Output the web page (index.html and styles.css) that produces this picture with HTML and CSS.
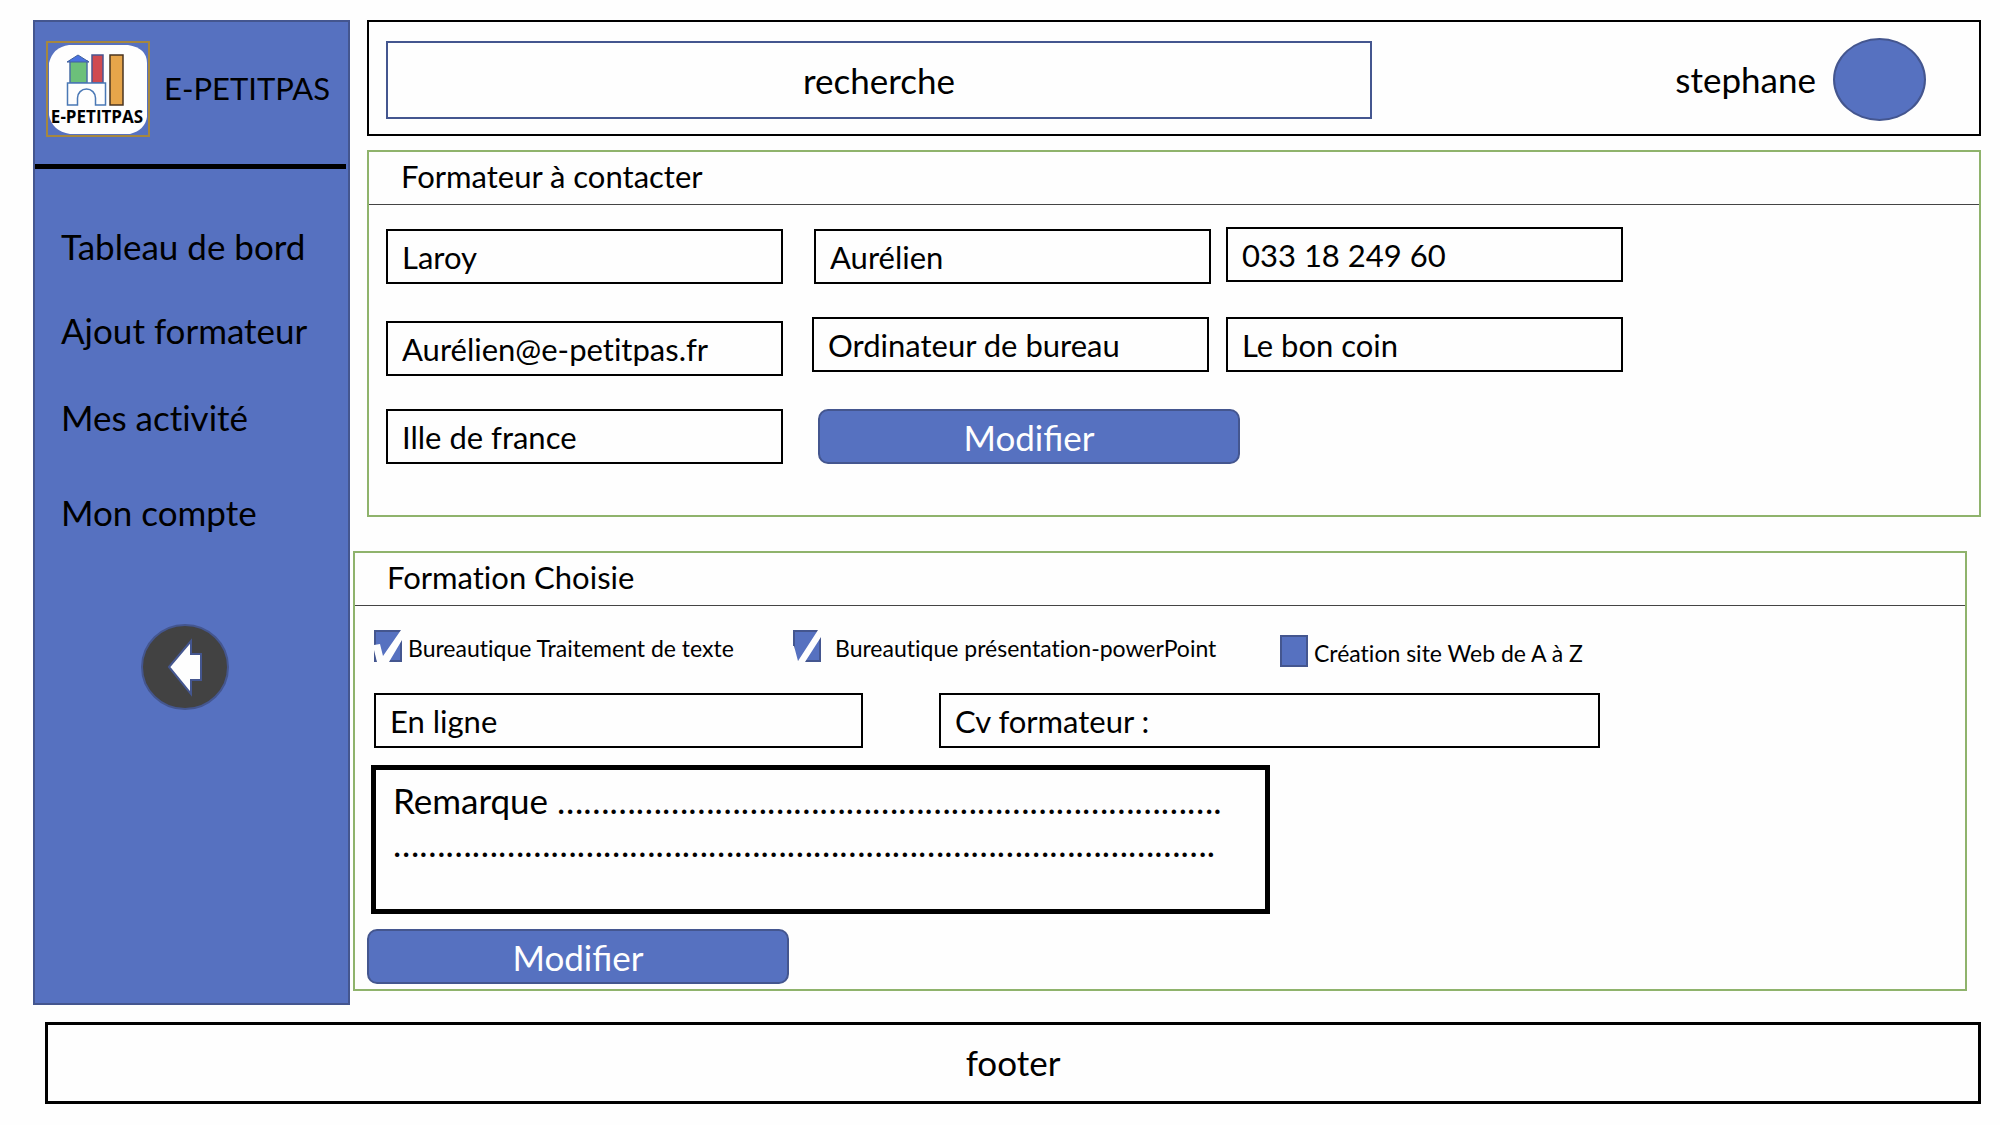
FILE: index.html
```html
<!DOCTYPE html>
<html lang="fr">
<head>
<meta charset="utf-8">
<meta name="viewport" content="width=device-width, initial-scale=1">
<title>E-PETITPAS</title>
<link rel="stylesheet" href="styles.css">
</head>
<body>
<div class="layout">
  <aside class="sidebar">
    <div class="brand">
      <svg class="brand-logo" viewBox="0 0 104 96" aria-hidden="true">
        <rect x="1" y="1" width="102" height="94" fill="#5671c0" stroke="#a5873f" stroke-width="2"/>
        <path d="M23 4H82Q101 7 101 22V76Q99 89 84 93H24Q6 90 3 74V22Q7 6 23 4Z" fill="#fefefe"/>
        <rect x="24" y="20" width="17" height="22" fill="#6cc07a" stroke="#4a6fa5" stroke-width="1.5"/>
        <path d="M21 21L32 14L43 21Z" fill="#4a72e0" stroke="#41619c"/>
        <rect x="46" y="14" width="11" height="28" fill="#d04a50" stroke="#4a5590" stroke-width="1.5"/>
        <rect x="64" y="14" width="13" height="50" fill="#e6a54a" stroke="#4a3520" stroke-width="1.5"/>
        <path d="M21.500 42H59.500V64H49.500V57A9 9 0 0 0 31.500 57V64H21.500Z" fill="#fefefe" stroke="#4a78b5" stroke-width="1.500"/>
        <text x="51" y="82" text-anchor="middle" class="brand-logo-text">E-PETITPAS</text>
      </svg>
      <span class="brand-name">E-PETITPAS</span>
    </div>
    <nav>
      <ul class="menu">
        <li><a href="#tableau">Tableau de bord</a></li>
        <li><a href="#ajout">Ajout formateur</a></li>
        <li><a href="#activites">Mes activité</a></li>
        <li><a href="#compte">Mon compte</a></li>
      </ul>
    </nav>
    <button class="back" type="button" aria-label="Retour">
      <svg viewBox="0 0 88 86" aria-hidden="true">
        <ellipse cx="44" cy="43" rx="43" ry="42" fill="#424242" stroke="#44568f" stroke-width="2"/>
        <path d="M28 43L50 17V30H60V56H50V70Z" fill="#fefefe" stroke="#44568f" stroke-width="2"/>
      </svg>
    </button>
  </aside>

  <main class="main">
    <header class="topbar">
      <input class="search" type="text" placeholder="recherche" aria-label="recherche">
      <div class="user"><span>stephane</span><span class="avatar"></span></div>
    </header>

    <section class="panel panel-contact">
      <h2 class="panel-title">Formateur à contacter</h2>
      <form class="contact-grid">
        <input class="field low" type="text" aria-label="Nom" value="Laroy">
        <input class="field low right" type="text" aria-label="Prénom" value="Aurélien">
        <input class="field" type="tel" aria-label="Téléphone" value="033 18 249 60">
        <input class="field low" type="text" aria-label="E-mail" value="Aurélien@e-petitpas.fr">
        <input class="field" type="text" aria-label="Matériel" value="Ordinateur de bureau">
        <input class="field" type="text" aria-label="Source" value="Le bon coin">
        <input class="field" type="text" aria-label="Région" value="Ille de france">
        <button class="button" type="button">Modifier</button>
      </form>
    </section>

    <section class="panel panel-training">
      <h2 class="panel-title">Formation Choisie</h2>
      <form class="training">
        <div class="choices">
          <label class="choice"><input class="tick" type="checkbox" checked>Bureautique Traitement de texte</label>
          <label class="choice choice-wide"><input class="tick tick-thin" type="checkbox" checked>Bureautique présentation-powerPoint</label>
          <label class="choice low"><input class="tick" type="checkbox">Création site Web de A à Z</label>
        </div>
        <div class="modes">
          <input class="field" type="text" aria-label="Mode" value="En ligne">
          <input class="field" type="text" aria-label="Cv formateur" value="Cv formateur :">
        </div>
        <textarea class="remark" aria-label="Remarque">Remarque ………………………………………………………………….
………………………………………………………………………………….</textarea>
        <button class="button" type="button">Modifier</button>
      </form>
    </section>
  </main>
</div>
<footer class="footer">footer</footer>
</body>
</html>
```
FILE: styles.css
```css
* { box-sizing: border-box; }

body {
  margin: 0;
  padding: 20px 19px 22px 33px;
  background: #fefefe;
  color: #000;
  font: 31px/36px Lato, "Liberation Sans", sans-serif;
  font-variant-ligatures: none;
}

input, button, textarea { font: inherit; color: inherit; margin: 0; }
input, textarea { font-variant-ligatures: none; }

.layout {
  display: grid;
  grid-template-columns: 317px minmax(0, 1fr);
  column-gap: 3px;
}

/* Sidebar */
.sidebar {
  min-height: 985px;
  background: #5671c0;
  border: 2px solid #44568f;
}

.brand {
  display: flex;
  gap: 14px;
  height: 147px;
  padding: 19px 0 0 11px;
  margin-right: 2px;
  border-bottom: 5px solid #000;
}

.brand-logo { width: 104px; height: 96px; flex: none; }
.brand-logo-text { font: bold 17px "Open Sans", sans-serif; }
.brand-name { line-height: 94px; }

.menu {
  display: grid;
  grid-template-rows: 84px 84px 90px 100px;
  align-items: center;
  list-style: none;
  margin: 0;
  padding: 35px 0 0 26px;
  font-size: 35px;
}
.menu a { color: inherit; text-decoration: none; }

.back {
  display: block;
  width: 88px;
  height: 86px;
  margin: 62px 0 0 106px;
  padding: 0;
  border: 0;
  background: none;
}
.back svg { display: block; }

/* Top bar */
.topbar {
  display: flex;
  justify-content: space-between;
  align-items: center;
  height: 116px;
  margin: 0 0 14px 14px;
  padding: 4px 53px 0 17px;
  border: 2px solid #000;
  font-size: 35px;
}

.search {
  width: 986px;
  height: 78px;
  border: 2px solid #44568f;
  background: none;
  text-align: center;
}
.search::placeholder { color: #000; opacity: 1; }

.user { display: flex; align-items: center; gap: 17px; padding-bottom: 2px; }
.avatar {
  width: 93px;
  height: 83px;
  border: 2px solid #44568f;
  border-radius: 50%;
  background: #5671c0;
}

/* Panels */
.panel { border: 2px solid #8fb36c; }
.panel-contact { min-height: 367px; margin: 0 0 34px 14px; }
.panel-training { min-height: 440px; margin-right: 14px; }

.panel-title {
  height: 53px;
  margin: 0;
  padding: 0 32px;
  border-bottom: 1px solid #444;
  font-size: 31px;
  font-weight: normal;
  line-height: 48px;
}

.field {
  width: 397px;
  max-width: 100%;
  height: 55px;
  padding: 0 14px;
  border: 2px solid #000;
  border-radius: 0;
  background: none;
}

.low { align-self: end; }
.right { justify-self: end; }

.contact-grid {
  display: grid;
  grid-template-columns: 411fr 399fr 397fr;
  grid-template-rows: 57px 59px 55px;
  gap: 33px 15px;
  max-width: 1271px;
  padding: 22px 17px;
}
.contact-grid .button { grid-column: span 2; margin-left: 6px; }

.button {
  width: 422px;
  height: 55px;
  padding: 0;
  border: 2px solid #44568f;
  border-radius: 10px;
  background: #5671c0;
  color: #fefefe;
  font-size: 35px;
  font-variant-ligatures: normal;
}

.training { padding: 24px 12px 5px; }

.choices {
  display: grid;
  grid-template-columns: 419px 487px 1fr;
  height: 37px;
  margin: 0 7px 26px;
  font-size: 23px;
}
.choice {
  display: flex;
  align-items: end;
  gap: 6px;
  height: 32px;
  line-height: 28px;
  white-space: nowrap;
}
.choice-wide { gap: 14px; }
.choice.low { align-self: end; }

.tick {
  position: relative;
  flex: none;
  width: 28px;
  height: 32px;
  border: 2px solid #44568f;
  background: #5671c0;
  appearance: none;
}
.tick:checked::after {
  content: "";
  position: absolute;
  inset: -2px;
  background: #fefefe;
  clip-path: polygon(0 15px, 6px 14px, 9px 26px, 27px 0, 28px 0, 28px 10px, 15px 32px, 3px 32px, 0 20px);
}
.tick-thin:checked::after {
  clip-path: polygon(0 16px, 1px 16px, 5px 31px, 25px 0, 28px 0, 28px 7px, 12px 32px, 0 32px);
}

.modes {
  display: grid;
  grid-template-columns: 489fr 661fr;
  gap: 76px;
  max-width: 1226px;
  margin: 0 7px 17px;
}
.modes .field { width: 100%; }

.remark {
  display: block;
  width: 899px;
  height: 149px;
  margin: 0 4px 15px;
  padding: 9px 17px;
  border: 5px solid #000;
  background: none;
  font-size: 35px;
  line-height: 43px;
  white-space: pre;
  overflow: hidden;
  resize: none;
}

/* Footer */
.footer {
  height: 82px;
  margin: 17px 0 0 12px;
  border: 3px solid #000;
  font-size: 35px;
  line-height: 74px;
  text-align: center;
}
```
